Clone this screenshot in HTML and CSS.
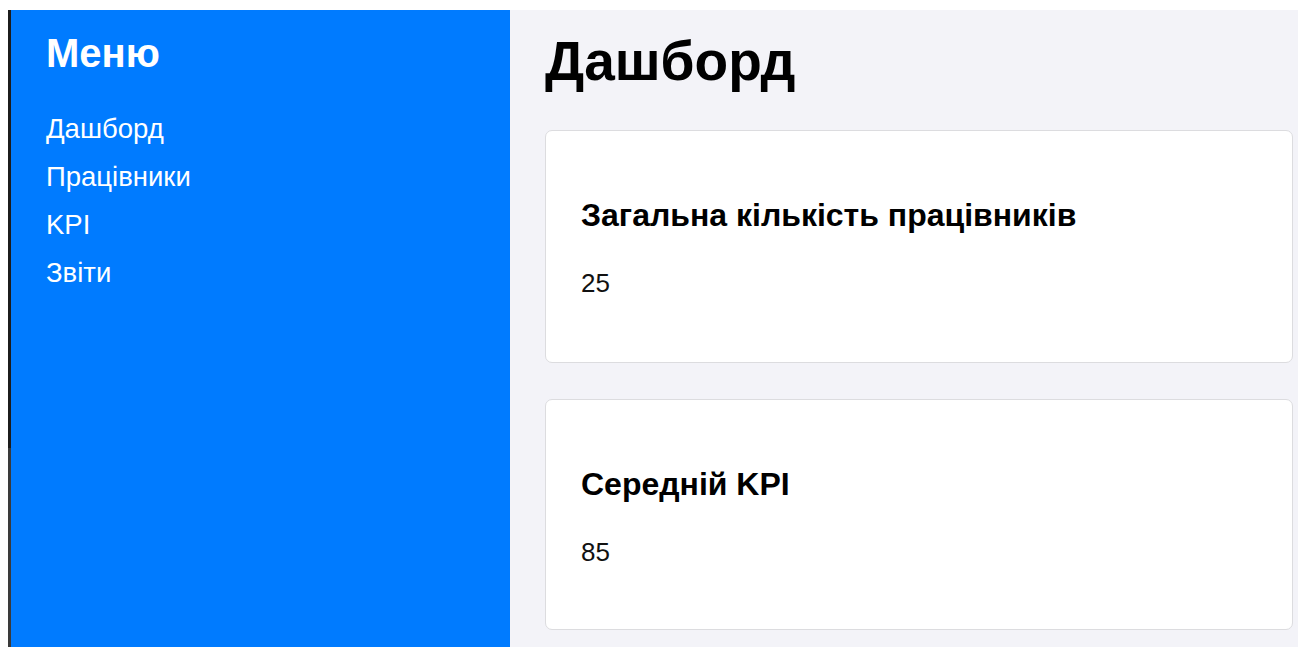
FILE: index.html
```html
<!DOCTYPE html>
<html lang="uk">
<head>
<meta charset="utf-8">
<title>Дашборд</title>
<link rel="stylesheet" href="styles.css">
</head>
<body>
<div class="app">
  <aside class="sidebar">
    <h2 class="sidebar-title">Меню</h2>
    <nav class="menu">
      <a href="#" class="menu-link">Дашборд</a>
      <a href="#" class="menu-link">Працівники</a>
      <a href="#" class="menu-link">KPI</a>
      <a href="#" class="menu-link">Звіти</a>
    </nav>
  </aside>
  <main class="content">
    <h1 class="page-title">Дашборд</h1>
    <section class="card">
      <h3 class="card-title">Загальна кількість працівників</h3>
      <p class="card-value">25</p>
    </section>
    <section class="card">
      <h3 class="card-title">Середній KPI</h3>
      <p class="card-value">85</p>
    </section>
  </main>
</div>
</body>
</html>
```

FILE: styles.css
```css
html, body {
  margin: 0;
  padding: 0;
  height: 100%;
  background: #ffffff;
  font-family: "Liberation Sans", Arial, sans-serif;
}

.app {
  display: flex;
  margin: 10px 0 0 8px;
  height: calc(100% - 10px);
}

.sidebar {
  width: 464px;
  flex-shrink: 0;
  background: #007bff;
  border-left: 3px solid #1c1c1c;
  border-image: linear-gradient(to bottom, #1c1c1c 438px, #3a3a3a 438px) 1;
  padding: 20px 0 0 35px;
  color: #ffffff;
}

.sidebar-title {
  margin: 0 0 37px;
  font-size: 40px;
  font-weight: bold;
  line-height: 46px;
}

.menu {
  display: flex;
  flex-direction: column;
  gap: 16px;
}

.menu-link {
  color: #ffffff;
  text-decoration: none;
  font-size: 27.5px;
  line-height: 32px;
}

.content {
  flex: 1;
  background: #f3f3f8;
  padding: 19px 5px 0 35px;
}

.page-title {
  margin: 0 0 37px;
  font-size: 55px;
  font-weight: bold;
  line-height: 64px;
  color: #000000;
}

.card {
  background: #ffffff;
  border: 1px solid #dcdcdf;
  border-radius: 7px;
  padding: 66px 35px 64px;
  margin-bottom: 36px;
}

.card:last-child {
  margin-bottom: 0;
  padding-bottom: 62px;
}

.card-title {
  margin: 0 0 34px;
  font-size: 32px;
  font-weight: bold;
  line-height: 37px;
  color: #000000;
}

.card-value {
  margin: 0;
  font-size: 26px;
  line-height: 30px;
  color: #111111;
}
```
